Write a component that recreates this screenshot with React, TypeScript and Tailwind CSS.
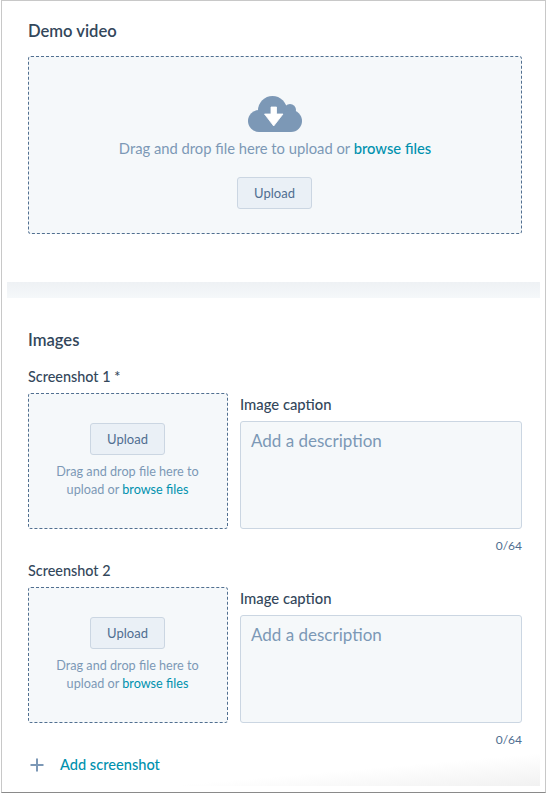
import React from 'react';

function CloudIcon() {
  return (
    <svg width="54" height="36" viewBox="0 0 54 36" className="block">
      <g fill="#7c98b6">
        <circle cx="24.5" cy="14.5" r="14.5" />
        <circle cx="42" cy="14" r="6" />
        <circle cx="11" cy="25" r="11" />
        <circle cx="43" cy="25" r="11" />
        <rect x="11" y="16" width="32" height="20" />
      </g>
      <path d="M23 11h5.5v7H35L25.7 30 16.5 18H23z" fill="#fff" stroke="#fff" strokeWidth="0.8" strokeLinejoin="round" />
    </svg>
  );
}

function UploadButton() {
  return (
    <button className="w-[75px] h-[32px] pt-[1px] rounded-[3px] border border-[#cbd6e2] bg-[#eaf0f6] text-[13px] text-[#506e91]">
      Upload
    </button>
  );
}

function ScreenshotRow({ label }: { label: string }) {
  return (
    <div>
      <div className="h-[18px] leading-[20px] text-[14.4px] font-medium text-[#33475b]">{label}</div>
      <div className="mt-[8px] flex gap-[12px]">
        <div className="w-[200px] h-[136px] shrink-0 rounded-[3px] border border-dashed border-[#516f90] bg-[#f5f8fa] flex flex-col items-center pt-[29px] pr-[1px]">
          <UploadButton />
          <p className="mt-[8px] text-[12.65px] leading-[18px] text-[#7c98b6] text-center">
            Drag and drop file here to
            <br />
            upload or <span className="text-[#0091ae]">browse files</span>
          </p>
        </div>
        <div className="flex-1">
          <div className="mt-[2px] h-[18px] leading-[18px] text-[14.8px] font-medium text-[#33475b]">Image caption</div>
          <div className="mt-[8px] h-[108px] rounded-[3px] border border-[#cbd6e2] bg-[#f5f8fa] px-[10px] pt-[7px] text-[17px] leading-[24px] text-[#7c98b6]">
            Add a description
          </div>
          <div className="mt-[10px] h-[14px] leading-[14px] text-right text-[12px] text-[#506e91]">0/64</div>
        </div>
      </div>
    </div>
  );
}

export default function App() {
  return (
    <div className="w-[547px] h-[795px] bg-white overflow-hidden font-['Lato','Liberation_Sans',sans-serif]">
      <div className="ml-[1px] w-[545px] h-[793px] border-x border-b border-t border-[#c8c8c8] border-b-[#8a8a8a] bg-white">
        <div className="pl-[26px] pr-[23px] pt-[21px] h-[281px]">
          <h2 className="h-[18px] leading-[18px] text-[16.6px] font-semibold text-[#33475b]">Demo video</h2>
          <div className="mt-[16px] h-[178px] rounded-[3px] border border-dashed border-[#516f90] bg-[#f5f8fa] flex flex-col items-center pt-[39px]">
            <CloudIcon />
            <p className="mt-[6px] text-[14.75px] leading-[20px] text-[#7c98b6]">
              Drag and drop file here to upload or <span className="font-medium text-[#0091ae]">browse files</span>
            </p>
            <div className="mt-[19px] mr-[1px]">
              <UploadButton />
            </div>
          </div>
        </div>
        <div className="mx-[5px] h-[16px] bg-gradient-to-b from-[#eef1f4] to-[#f5f8fa]" />
        <div className="pl-[26px] pr-[23px] pt-[33px]">
          <h2 className="h-[18px] leading-[18px] text-[16.6px] font-semibold text-[#33475b]">Images</h2>
          <div className="mt-[18px] flex flex-col gap-[8px]">
            <ScreenshotRow label="Screenshot 1 *" />
            <ScreenshotRow label="Screenshot 2" />
          </div>
        </div>
        <div className="mt-[4px] mx-[5px] h-[35px] pt-[4px] pl-[21px] bg-[linear-gradient(175deg,#fff_60%,#f1f1f1_100%)]">
          <div className="flex items-center h-[20px] text-[14.6px] font-medium text-[#0091ae]">
            <svg width="14" height="14" viewBox="0 0 14 14" className="ml-[2px] mr-[16px]">
              <path d="M7 0.5v13M0.5 7h13" stroke="#7c98b6" strokeWidth="2" />
            </svg>
            Add screenshot
          </div>
        </div>
      </div>
    </div>
  );
}
